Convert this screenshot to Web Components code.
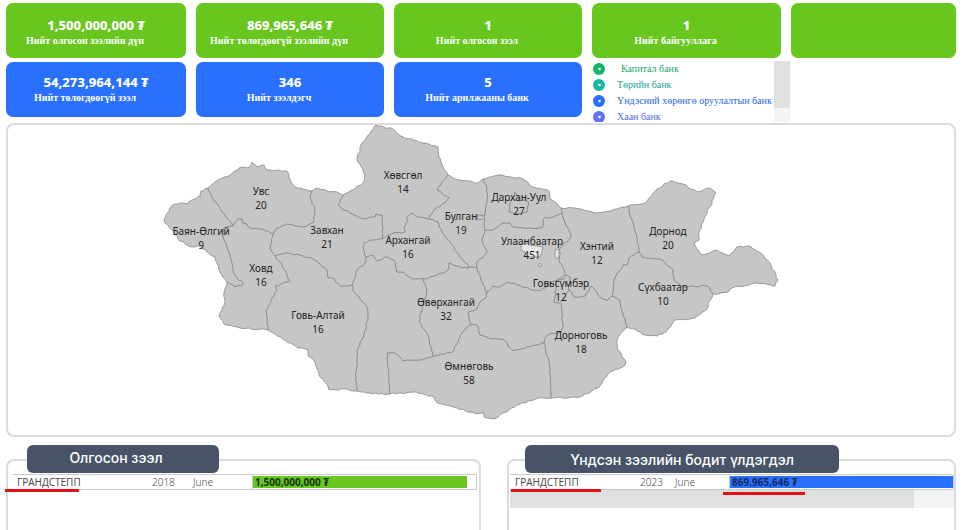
<!DOCTYPE html>
<html lang="mn">
<head>
<meta charset="utf-8">
<title>Зээлийн мэдээлэл</title>
<style>
body { margin: 0; background: #fff; font-family: "Noto Sans", sans-serif; }
</style>
</head>
<body>
<loan-dashboard></loan-dashboard>

<template id="t-dashboard">
<style>
:host { display: flex; flex-direction: column; box-sizing: border-box; min-height: 100vh; padding: 3px 18px 0 6px; }
.stats { display: grid; grid-template-columns: 180fr 188fr 188fr 189fr 165fr; column-gap: 10px; row-gap: 4px; align-items: start; margin-bottom: 1px; }
bank-list { grid-column: 4 / 6; margin-top: -1px; }
.details { display: grid; grid-template-columns: 475fr 449fr; column-gap: 26px; flex: 1; margin-top: 8px; }
</style>
<section class="stats">
  <stat-card><span slot="value">1,500,000,000 ₮</span>Нийт олгосон зээлийн дүн</stat-card>
  <stat-card><span slot="value">869,965,646 ₮</span>Нийт төлөгдөөгүй зээлийн дүн</stat-card>
  <stat-card><span slot="value">1</span>Нийт олгосон зээл</stat-card>
  <stat-card><span slot="value">1</span>Нийт байгууллага</stat-card>
  <stat-card></stat-card>
  <stat-card tone="blue"><span slot="value">54,273,964,144 ₮</span>Нийт төлөгдөөгүй зээл</stat-card>
  <stat-card tone="blue"><span slot="value">346</span>Нийт зээлдэгч</stat-card>
  <stat-card tone="blue"><span slot="value">5</span>Нийт арилжааны банк</stat-card>
  <bank-list></bank-list>
</section>
<province-map></province-map>
<section class="details">
  <loan-panel name="ГРАНДСТЕПП" year="2018" month="June" amount="1,500,000,000 ₮">Олгосон зээл</loan-panel>
  <loan-panel kind="balance" name="ГРАНДСТЕПП" year="2023" month="June" amount="869,965,646 ₮">Үндсэн зээлийн бодит үлдэгдэл</loan-panel>
</section>
</template>

<template id="t-card">
<style>
:host { display: block; box-sizing: border-box; min-height: 55px; padding-top: 13px; border-radius: 7px; background: #67c71e; color: #fff; text-align: center; white-space: nowrap; }
:host([tone="blue"]) { background: #2970ff; padding-top: 11px; }
.value { font: 800 13px/18px "Noto Sans", sans-serif; }
.label { font: 700 10px/14px "Liberation Serif", serif; padding-right: 22px; }
</style>
<div class="value"><slot name="value"></slot></div>
<div class="label"><slot></slot></div>
</template>

<template id="t-banks">
<style>
:host { display: grid; grid-template-columns: 182px 16px; height: 61px; overflow: hidden; }
ul { list-style: none; margin: 0; padding: 0 0 0 1px; overflow: hidden; font: 10px/16px "Liberation Serif", serif; white-space: nowrap; }
li { display: flex; align-items: center; color: var(--c); gap: var(--gap, 12px); }
svg { width: 12px; height: 12px; flex: none; }
.bar { background: #f4f4f4; }
.thumb { height: 47px; background: #e0e0e0; }
</style>
<ul>
  <li style="--c:#18a866;--gap:16px"><svg viewBox="0 0 12 12"><circle cx="6" cy="6" r="6" fill="#18b268"/><circle cx="6.500" cy="6" r="1.300" fill="#fff"/></svg>Капитал банк</li>
  <li style="--c:#13a596"><svg viewBox="0 0 12 12"><circle cx="6" cy="6" r="6" fill="#18b8a0"/><circle cx="6.500" cy="6" r="1.300" fill="#fff"/></svg>Төрийн банк</li>
  <li style="--c:#2464e8"><svg viewBox="0 0 12 12"><circle cx="6" cy="6" r="6" fill="#2970ff"/><circle cx="6.500" cy="6" r="1.300" fill="#fff"/></svg>Үндэсний хөрөнгө оруулалтын банк</li>
  <li style="--c:#5568dc"><svg viewBox="0 0 12 12"><circle cx="6" cy="6" r="6" fill="#6172f3"/><circle cx="6.500" cy="6" r="1.300" fill="#fff"/></svg>Хаан банк</li>
</ul>
<div class="bar"><div class="thumb"></div></div>
</template>

<template id="t-map">
<style>
:host { display: block; border: 2px solid #d9dcde; border-radius: 8px; }
svg { display: block; width: 100%; height: auto; }
.land { fill: #c6c6c6; stroke: #999; stroke-width: 1; }
.line { fill: none; stroke: #8b8b8b; stroke-width: 1; stroke-linejoin: round; }
.city { fill: #e6e6e6; stroke: #999; stroke-width: 1; }
text { font: 10px "Noto Sans", sans-serif; fill: #222; text-anchor: middle; }
</style>
<svg viewBox="8 125 946 310" role="img" aria-label="Аймгуудын газрын зураг"></svg>
</template>

<template id="t-panel">
<style>
:host { display: block; position: relative; margin-top: 14px; padding: 0 2px 0 4px; border: 2px solid #d9dbde; border-bottom: 0; border-radius: 8px 8px 0 0; --bar: #67c71e; --ink: #15300a; }
:host([kind="balance"]) { padding: 0 0 0 1px; --bar: #2970ff; --ink: #14285c; }
h2 { box-sizing: border-box; width: 192px; height: 28px; margin: -16px 0 1px 15px; padding-right: 14px; border-radius: 6px; background: #475467; color: #fff; font: 500 14px/25px Inter, sans-serif; text-align: center; white-space: nowrap; }
:host([kind="balance"]) h2 { width: 314px; padding-right: 0; line-height: 30px; }
table { width: 100%; table-layout: fixed; border-collapse: collapse; font-size: 10px; line-height: 14px; color: #4a4a4a; white-space: nowrap; }
td { padding: 0; height: 14px; border: 0 solid #ccc; border-width: 1px 0; font-weight: 300; }
td:first-child { width: 140px; padding-left: 5px; box-sizing: border-box; font-family: "Open Sans", sans-serif; font-weight: 500; color: #444; }
td:nth-child(2) { width: 41px; }
td:nth-child(3) { width: 59px; }
td:last-child { border-width: 1px; }
:host([kind="balance"]) td:first-child { width: 130px; }
:host([kind="balance"]) td:nth-child(2) { width: 35px; }
:host([kind="balance"]) td:nth-child(3) { width: 54px; }
.bar { width: 96%; height: 12px; margin: 1px 0; padding-left: 2px; box-sizing: border-box; background: var(--bar); color: var(--ink); font-weight: 700; line-height: 12px; }
:host([kind="balance"]) .bar { width: 100%; }
.scroll { display: none; height: 18px; background: #f4f4f4; }
:host([kind="balance"]) .scroll { display: block; }
.thumb { width: 91%; height: 100%; background: #e0e0e0; }
.mark { position: absolute; height: 3px; background: #e01218; top: 28px; left: -3px; width: 74px; }
:host([kind="balance"]) .mark { left: 2px; width: 90px; }
.mark.sum { display: none; }
:host([kind="balance"]) .mark.sum { display: block; top: 31px; left: 214px; width: 82px; }
</style>
<h2><slot></slot></h2>
<table><tbody><tr><td></td><td></td><td></td><td><div class="bar"></div></td></tr></tbody></table>
<div class="scroll"><div class="thumb"></div></div>
<div class="mark"></div><div class="mark sum"></div>
</template>

<script>
class TemplateElement extends HTMLElement {
  constructor() {
    super();
    this.attachShadow({ mode: "open" }).append(
      document.getElementById(this.constructor.template).content.cloneNode(true));
  }
}
class StatCard extends TemplateElement { static template = "t-card"; }
class BankList extends TemplateElement { static template = "t-banks"; }

class LoanPanel extends TemplateElement {
  static template = "t-panel";
  connectedCallback() {
    const cells = this.shadowRoot.querySelectorAll("td");
    ["name", "year", "month"].forEach((key, i) => { cells[i].textContent = this.getAttribute(key); });
    this.shadowRoot.querySelector(".bar").textContent = this.getAttribute("amount");
  }
}

const COUNTRY = "164,220 170,208 175,204 183,203 187,204 192,200 200,196 201,191 208,188 218,180 230,175 239,168 250,167 252,162 255,165 258,167 264,165 267,170 287,171 291,182 295,187 312,191 318,188 327,191 337,192 343,195 353,190 363,183 365,175 357,159 362,143 370,134 376,125 393,129 403,137 417,141 438,147 439,157 443,167 448,175 458,180 478,183 483,179 500,175 523,179 533,187 549,191 550,198 561,208 575,208 595,213 605,212 628,206 645,203 657,189 670,181 683,184 697,192 710,188 716,193 703,222 699,232 699,240 694,243 702,255 717,250 729,256 737,247 750,246 761,253 770,263 778,280 775,286 757,283 732,288 728,292 713,294 708,303 707,309 695,318 675,320 667,331 657,336 645,335 635,329 625,328 617,340 617,348 626,362 625,365 608,374 598,388 580,397 552,398 538,398 517,405 494,419 484,417 484,413 477,414 457,408 438,403 432,396 413,392 390,394 370,393 357,391 347,389 329,390 328,386 319,375 315,362 308,356 308,350 298,348 268,330 240,328 224,324 219,315 225,302 224,293 227,282 220,272 215,257 207,252 200,246 192,247 180,241 174,232 165,223 164,220";
const BORDERS = [
  "208,188 212,198 218,205 222,212 227,218 233,226",
  "233,226 237,220 242,219 243,223 247,224 250,228 263,229 273,234 277,228 287,224 303,227 314,222 315,208 310,198 312,191",
  "233,226 224,228 223,237 228,250 233,270 237,278 243,283 243,285 235,287 227,282",
  "273,234 270,248 275,256 282,265 290,281 283,283 278,286 275,286 277,290 266,311 268,330",
  "275,256 287,253 303,256 315,260 327,270 328,278 333,278 340,286 352,285",
  "352,285 353,290 367,307 368,317 363,338 358,348 356,377 357,391",
  "352,285 357,270 365,263 366,257 373,255 377,261 385,257 394,260 397,272 403,272 412,279 425,279 437,275 448,270 449,263 462,268 477,267",
  "366,257 363,248 364,243 371,240 382,239",
  "343,195 338,205 350,213 363,219 375,217 376,214 382,215 383,228 382,239 393,233 405,232 404,227 408,220 406,218 411,213 418,217 429,219",
  "429,219 430,215 435,209 445,203 447,200 449,198 437,190 448,175",
  "429,219 438,222 442,232 450,242 460,257 469,267",
  "483,179 487,188 487,202 484,217 485,230 482,240 487,253 477,262 477,267",
  "485,215 477,215 477,219 483,219",
  "485,230 493,230 503,223 510,223 513,227 530,228 542,228 543,220 545,217 550,218 562,213 562,208",
  "562,213 565,222 570,232 571,237 560,248 559,260 566,275",
  "510,201 509,212 517,214 527,212 529,204 526,200 519,201 517,195 515,192 513,197 510,201",
  "566,275 570,277 569,290 564,298 560,303 554,302 555,292 557,280 566,275",
  "487,292 493,286 500,287 507,282 517,285 533,290 540,291 552,282 565,278",
  "477,267 480,275 483,285 487,292 486,298 480,302 477,309 468,312 471,325",
  "423,279 427,290 419,322 428,335 433,356",
  "390,394 387,353 395,353 403,361 422,360 433,356 453,352 456,345 462,333 470,325 477,325 480,335 492,339 503,339 513,351 527,347 545,343",
  "561,303 563,327 560,333 552,333 547,335 544,343 550,367 551,398",
  "569,290 575,297 585,296 591,286 602,299 608,300 612,296",
  "612,296 615,278 623,265 628,264 629,258 639,252",
  "628,206 632,220 637,237 639,252 642,257 662,260 673,270 674,280 683,287 708,286 713,294",
  "612,296 620,300 623,313 627,328"
];
const PROVINCES = [
  ["Увс", 20, 261, 195], ["Хөвсгөл", 14, 403, 179], ["Дархан-Уул", 27, 519, 201],
  ["Булган", 19, 461, 220], ["Баян-Өлгий", 9, 201, 235], ["Завхан", 21, 327, 234],
  ["Архангай", 16, 408, 244], ["Улаанбаатар", 451, 532, 245], ["Хэнтий", 12, 597, 250],
  ["Дорнод", 20, 668, 235], ["Ховд", 16, 261, 272], ["Говьсүмбэр", 12, 561, 287],
  ["Сүхбаатар", 10, 663, 291], ["Өвөрхангай", 32, 446, 306], ["Говь-Алтай", 16, 318, 319],
  ["Дорноговь", 18, 581, 339], ["Өмнөговь", 58, 469, 370]
];

// Breaks each straight run into short steps with a small repeatable sideways shift.
function roughen(points) {
  const p = points.split(" ").map(s => s.split(",").map(Number));
  let d = "M" + p[0];
  for (let i = 1; i < p.length; i++) {
    const [ax, ay] = p[i - 1], [bx, by] = p[i];
    const len = Math.hypot(bx - ax, by - ay), n = Math.max(1, Math.round(len / 3));
    for (let k = 1; k < n; k++) {
      const x = ax + (bx - ax) * k / n, y = ay + (by - ay) * k / n;
      const s = Math.sin(x * 12.9 + y * 78.2) * 43758.5, r = (s - Math.floor(s) - .5) * 1.5;
      d += "L" + (x - (by - ay) / len * r).toFixed(1) + "," + (y + (bx - ax) / len * r).toFixed(1);
    }
    d += "L" + p[i];
  }
  return d;
}

class ProvinceMap extends TemplateElement {
  static template = "t-map";
  connectedCallback() {
    this.shadowRoot.querySelector("svg").innerHTML =
      `<path class="land" d="${roughen(COUNTRY)}Z"/>` +
      BORDERS.map(b => `<path class="line" d="${roughen(b)}"/>`).join("") +
      `<path class="city" d="M521,244L528,243L530,245L543,247L542,252L540,257L527,257L525,252L521,250Z"/>
       <path class="city" d="M556,249L559,250L559,256L557,259L555,257L555,252Z"/>
       <circle class="city" cx="540" cy="265" r="1.500"/>` +
      PROVINCES.map(([n, v, x, y]) => `<text x="${x}" y="${y}">${n}</text><text x="${x}" y="${y + 14}">${v}</text>`).join("");
  }
}
class LoanDashboard extends TemplateElement { static template = "t-dashboard"; }

customElements.define("stat-card", StatCard);
customElements.define("bank-list", BankList);
customElements.define("loan-panel", LoanPanel);
customElements.define("province-map", ProvinceMap);
customElements.define("loan-dashboard", LoanDashboard);
</script>
</body>
</html>
